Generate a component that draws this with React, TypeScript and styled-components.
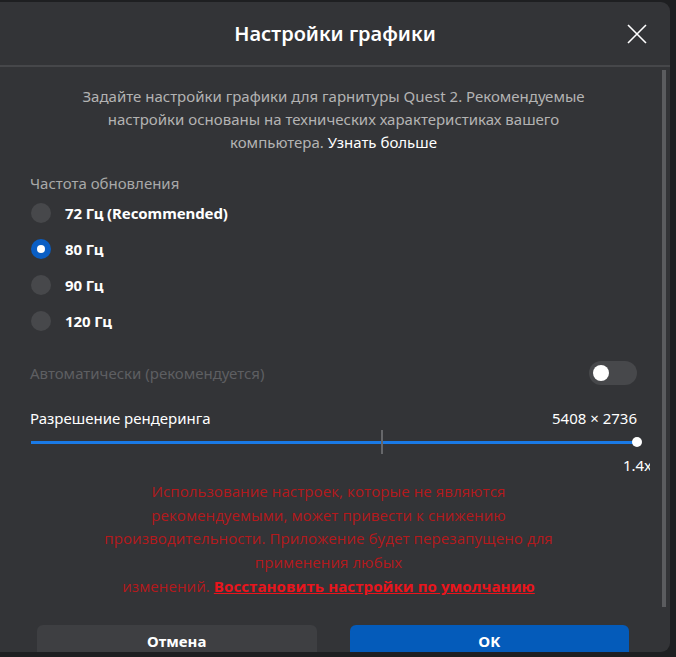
import styled, { createGlobalStyle } from 'styled-components';

const GlobalStyle = createGlobalStyle`
  html, body {
    margin: 0;
    padding: 0;
    background: #1e1f21;
    overflow: hidden;
  }
  * {
    box-sizing: border-box;
  }
`;

const rates = [
  { id: 'r72', label: '72 Гц (Recommended)', checked: false },
  { id: 'r80', label: '80 Гц', checked: true },
  { id: 'r90', label: '90 Гц', checked: false },
  { id: 'r120', label: '120 Гц', checked: false },
];

const App = () => {
  return (
    <>
      <GlobalStyle />
      <Page>
        <Dialog>
          <Header>
            <span />
            <Title>Настройки графики</Title>
            <CloseButton aria-label="Закрыть">
              <svg width="20" height="20" viewBox="0 0 20 20">
                <path d="M1 1L19 19M19 1L1 19" stroke="#fff" strokeWidth="1.6" fill="none" />
              </svg>
            </CloseButton>
          </Header>

          <Body>
            <Content>
              <Description>
                Задайте настройки графики для гарнитуры Quest 2. Рекомендуемые
                <br />
                настройки основаны на технических характеристиках вашего
                <br />
                компьютера. <LearnMore>Узнать больше</LearnMore>
              </Description>

              <SectionLabel>Частота обновления</SectionLabel>
              {rates.map((rate) => (
                <RadioRow key={rate.id}>
                  <Radio $checked={rate.checked} />
                  <RadioLabel>{rate.label}</RadioLabel>
                </RadioRow>
              ))}

              <ToggleRow>
                <DisabledLabel>Автоматически (рекомендуется)</DisabledLabel>
                <Toggle>
                  <Knob />
                </Toggle>
              </ToggleRow>

              <ResolutionRow>
                <Label>Разрешение рендеринга</Label>
                <Label>5408 × 2736</Label>
              </ResolutionRow>

              <Slider>
                <Track />
                <Tick />
                <Thumb />
              </Slider>
              <ScaleRow>
                <Scale>1.4x</Scale>
              </ScaleRow>

              <Warning>
                Использование настроек, которые не являются
                <br />
                рекомендуемыми, может привести к снижению
                <br />
                производительности. Приложение будет перезапущено для
                <br />
                применения любых
                <br />
                изменений. <WarningLink>Восстановить настройки по умолчанию</WarningLink>
              </Warning>
            </Content>
            <Scrollbar />
          </Body>

          <Footer>
            <Button>Отмена</Button>
            <Button $primary>OK</Button>
          </Footer>
        </Dialog>
      </Page>
    </>
  );
};

const Page = styled.div`
  width: 676px;
  height: 657px;
  padding-top: 2px;
  display: flex;
`;

const Dialog = styled.div`
  width: 670px;
  height: 650px;
  background: #333437;
  border-radius: 0 9px 9px 0;
  overflow: hidden;

  display: flex;
  flex-direction: column;

  font-family: 'Noto Sans', 'Open Sans', sans-serif;
  color: #ffffff;
`;

const Header = styled.div`
  height: 65px;
  flex-shrink: 0;

  display: grid;
  grid-template-columns: 1fr auto 1fr;
  align-items: center;

  border-bottom: 2px solid #46474a;
`;

const Title = styled.h1`
  margin: 0;
  font-size: 20px;
  font-weight: 600;
`;

const CloseButton = styled.button`
  justify-self: end;
  margin-right: 23px;
  padding: 0;

  display: flex;

  background: none;
  border: none;
`;

const Body = styled.div`
  flex: 1;
  min-height: 0;

  display: flex;
`;

const Content = styled.div`
  flex: 1;
  padding: 18px 23px 0 30px;

  display: flex;
  flex-direction: column;

  font-size: 15px;
  overflow: hidden;
`;

const Scrollbar = styled.div`
  width: 4px;
  margin: 3px 4px 5px 2px;
  background: #5b5c5f;
`;

const Description = styled.p`
  margin: 0 -10px 18px;

  text-align: center;
  line-height: 23px;
  color: #b3b3b3;
  white-space: nowrap;
`;

const LearnMore = styled.span`
  color: #ffffff;
`;

const SectionLabel = styled.div`
  line-height: 23px;
  color: #a9a9a9;
`;

const RadioRow = styled.div`
  height: 36px;

  display: flex;
  align-items: center;
  gap: 14px;
`;

const Radio = styled.span<{ $checked?: boolean }>`
  width: 20px;
  height: 20px;
  margin-left: 1px;
  border-radius: 50%;

  display: flex;
  align-items: center;
  justify-content: center;

  background: ${(p) => (p.$checked ? '#0a5ec4' : '#47484b')};

  &::after {
    content: '';
    width: 8px;
    height: 8px;
    border-radius: 50%;
    background: #ffffff;
    display: ${(p) => (p.$checked ? 'block' : 'none')};
  }
`;

const RadioLabel = styled.span`
  font-weight: 700;
  letter-spacing: -0.1px;
`;

const ToggleRow = styled.div`
  margin-top: 22px;

  display: flex;
  align-items: center;
  justify-content: space-between;
`;

const DisabledLabel = styled.span`
  color: #5e5f62;
`;

const Toggle = styled.div`
  width: 48px;
  height: 24px;
  padding: 0 4px;
  border-radius: 12px;

  display: flex;
  align-items: center;

  background: #47484b;
`;

const Knob = styled.span`
  width: 16px;
  height: 16px;
  border-radius: 50%;
  background: #ffffff;
`;

const ResolutionRow = styled.div`
  margin-top: 22px;

  display: flex;
  justify-content: space-between;
  line-height: 23px;
`;

const Label = styled.span`
  color: #ffffff;
`;

const Slider = styled.div`
  position: relative;
  height: 24px;
  margin-left: 1px;

  display: flex;
  align-items: center;
`;

const Track = styled.div`
  flex: 1;
  height: 3px;
  background: #1a7ae6;
`;

const Tick = styled.span`
  position: absolute;
  left: 57.8%;
  top: 0;
  width: 2px;
  height: 24px;
  background: #66676a;
`;

const Thumb = styled.span`
  position: absolute;
  right: -5px;
  top: 7px;
  width: 10px;
  height: 10px;
  border-radius: 50%;
  background: #ffffff;
`;

const ScaleRow = styled.div`
  height: 22px;
  margin-right: -13px;

  display: flex;
  justify-content: flex-end;
  align-items: center;

  overflow: hidden;
`;

const Scale = styled.span`
  margin-right: -2px;
  font-size: 15px;
  color: #ffffff;
`;

const Warning = styled.p`
  margin: 4px -20px 0 -30px;

  text-align: center;
  line-height: 23.7px;
  color: #b5191c;
  font-family: 'Open Sans', 'Noto Sans', sans-serif;
  letter-spacing: 0.1px;
`;

const WarningLink = styled.a`
  color: #ea141c;
  font-weight: 700;
  text-decoration: underline;
`;

const Footer = styled.div`
  height: 40px;
  flex-shrink: 0;
  padding: 13px 41px 0 37px;

  display: flex;
  gap: 33px;
`;

const Button = styled.button<{ $primary?: boolean }>`
  flex: 1;
  height: 44px;
  border: none;
  border-radius: 6px;

  background: ${(p) => (p.$primary ? '#045bba' : '#3e3f42')};
  color: #ffffff;

  font-family: 'Noto Sans', 'Open Sans', sans-serif;
  font-size: 15px;
  font-weight: 700;
  padding-bottom: 14px;
`;

export default App;
